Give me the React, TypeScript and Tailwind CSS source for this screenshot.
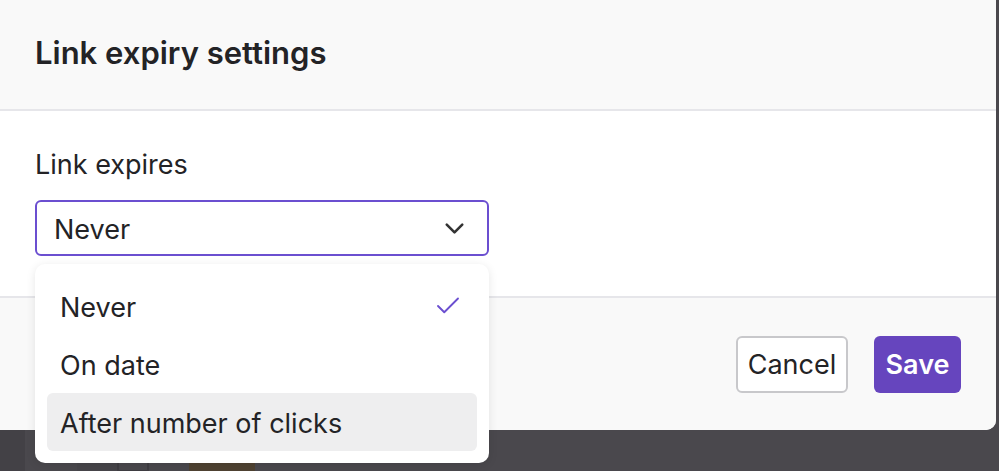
import React from "react";
import { ChevronDown, Check } from "lucide-react";

export default function App() {
  return (
    <div
      className="w-[999px] h-[471px] bg-[#4a484d] overflow-hidden flex flex-col"
      style={{ fontFamily: "Inter, 'Noto Sans', sans-serif" }}
    >
      <div className="w-[996px] shrink-0 bg-white rounded-br-[10px] flex flex-col text-[#232326]">
        <div className="h-[111px] bg-[#f9f9f9] border-b-2 border-[#e6e6ea] px-[35px] flex items-center">
          <h1 className="text-[31px] font-semibold leading-none tracking-[0px] pb-[4px]">
            Link expiry settings
          </h1>
        </div>
        <div className="bg-white px-[35px] pt-[36px] pb-[40px] flex flex-col gap-[17px]">
          <div className="text-[27px] leading-[36px]">Link expires</div>
          <div className="relative w-[454px] z-10">
            <div className="h-[56px] border-2 border-[#6b4fd0] rounded-[6px] flex items-center justify-between pl-[17px] pr-[17px] bg-white">
              <span className="text-[27px] leading-none pt-[3px]">Never</span>
              <ChevronDown size={31} strokeWidth={2} className="text-[#333]" />
            </div>
            <div className="absolute left-0 top-[64px] w-[454px] bg-white rounded-[10px] shadow-[0_2px_10px_rgba(0,0,0,0.10)] pt-[13px] pb-[12px] px-[12px] flex flex-col">
              <div className="h-[58px] flex items-center justify-between pl-[13px] pr-[14px] rounded-[6px]">
                <span className="text-[27px] leading-none pt-[2px]">Never</span>
                <Check size={30} strokeWidth={1.5} className="text-[#6b4fd0]" />
              </div>
              <div className="h-[58px] flex items-center pl-[13px] rounded-[6px]">
                <span className="text-[27px] leading-none pt-[2px]">On date</span>
              </div>
              <div className="h-[58px] flex items-center pl-[13px] rounded-[6px] bg-[#eeeeef]">
                <span className="text-[27px] leading-none pt-[2px]">After number of clicks</span>
              </div>
            </div>
          </div>
        </div>
        <div className="h-[134px] bg-[#f9f9f9] border-t-2 border-[#e6e6ea] rounded-br-[10px] px-[35px] flex items-center justify-end gap-[26px]">
          <button className="h-[57px] w-[112px] border-2 border-[#c8c8cb] rounded-[6px] bg-white text-[27px] leading-none text-[#232326]">
            Cancel
          </button>
          <button className="h-[57px] w-[87px] rounded-[6px] bg-[#6645be] text-[27px] leading-none font-semibold text-white">
            Save
          </button>
        </div>
      </div>
      <div className="flex items-start h-[41px] text-[#2e2d31]">
        <div className="w-[25px] h-full bg-[#434146]" />
        <div className="w-[52px] h-full" />
        <div className="w-[40px] h-full bg-[#47454a]" />
        <div className="mt-[28px] w-[32px] h-[14px] border-2 border-[#3f3d42] rounded-t-[5px]" />
        <div className="w-[40px]" />
        <div className="mt-[28px] w-[66px] h-[14px] bg-[#4f4232]" />
        <div className="w-[30px]" />
        <div className="mt-[30px] w-[40px] h-[11px] overflow-hidden">
          <div className="w-[20px] h-[3px] bg-[#1e1d20]" />
        </div>
      </div>
    </div>
  );
}
